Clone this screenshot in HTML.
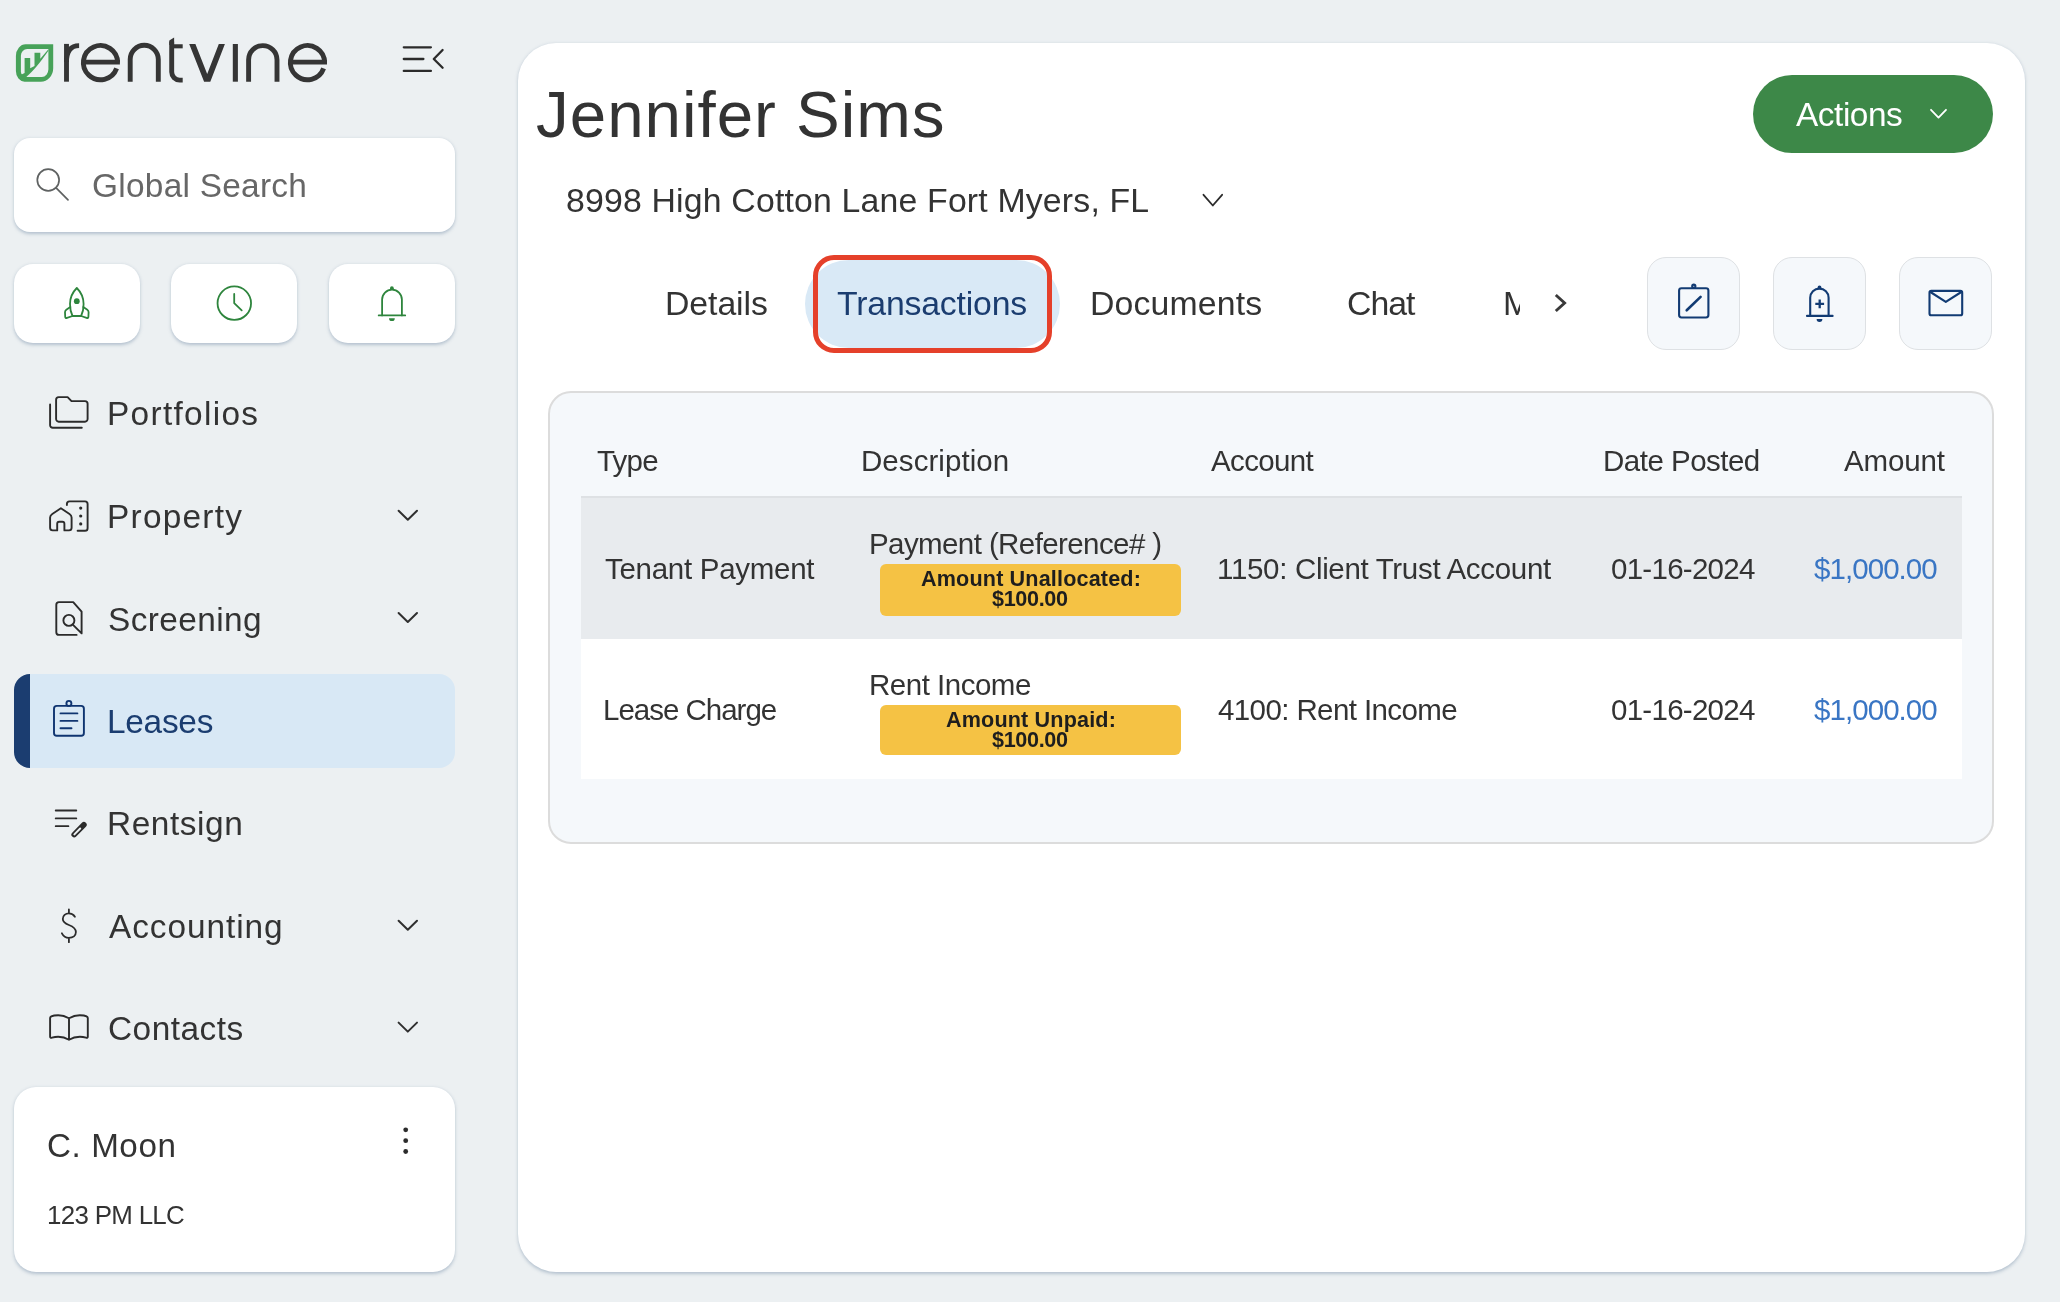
<!DOCTYPE html>
<html><head><meta charset="utf-8">
<style>
html,body{margin:0;padding:0}
body{width:2060px;height:1302px;background:#ecf0f2;position:relative;overflow:hidden;font-family:"Liberation Sans",sans-serif}
.abs{position:absolute}
.tx{position:absolute;white-space:pre;line-height:1;will-change:transform;font-family:"Liberation Sans",sans-serif}
.card{position:absolute;background:#fff}
svg{position:absolute;left:0;top:0;overflow:visible}
</style></head>
<body>
<!-- sidebar boxes -->
<div class="card" style="left:14px;top:138px;width:441px;height:94px;border-radius:16px;box-shadow:0 1.5px 3.5px rgba(90,118,150,0.38)"></div>
<div class="card" style="left:14px;top:264px;width:126px;height:79px;border-radius:19px;box-shadow:0 1.5px 3.5px rgba(90,118,150,0.38)"></div>
<div class="card" style="left:171px;top:264px;width:126px;height:79px;border-radius:19px;box-shadow:0 1.5px 3.5px rgba(90,118,150,0.38)"></div>
<div class="card" style="left:329px;top:264px;width:126px;height:79px;border-radius:19px;box-shadow:0 1.5px 3.5px rgba(90,118,150,0.38)"></div>
<div class="abs" style="left:14px;top:674px;width:425px;height:94px;border-radius:16px;background:#d8e8f5;border-left:16px solid #1b3d70"></div>
<div class="card" style="left:14px;top:1087px;width:441px;height:185px;border-radius:22px;box-shadow:0 1.5px 3.5px rgba(90,118,150,0.38)"></div>
<!-- main card -->
<div class="card" style="left:518px;top:43px;width:1507px;height:1229px;border-radius:38px;box-shadow:0 1.5px 3.5px rgba(90,118,150,0.38)"></div>
<!-- actions button -->
<div class="abs" style="left:1753px;top:75px;width:240px;height:78px;border-radius:39px;background:#3d8848"></div>
<!-- transactions pill -->
<div class="abs" style="left:805px;top:259.5px;width:255px;height:88px;border-radius:44px;background:#d9e9f6"></div>
<div class="abs" style="left:813px;top:255px;width:228.5px;height:87.5px;border-radius:21px;border:5px solid #e5402a"></div>
<!-- icon buttons -->
<div class="abs" style="left:1647px;top:256.5px;width:91px;height:91px;border-radius:19px;background:#f5f8fb;border:1.5px solid #dee1e4"></div>
<div class="abs" style="left:1773px;top:256.5px;width:91px;height:91px;border-radius:19px;background:#f5f8fb;border:1.5px solid #dee1e4"></div>
<div class="abs" style="left:1899px;top:256.5px;width:91px;height:91px;border-radius:19px;background:#f5f8fb;border:1.5px solid #dee1e4"></div>
<!-- table container -->
<div class="abs" style="left:548px;top:390.5px;width:1442px;height:449.5px;border-radius:23px;background:#f5f8fb;border:2px solid #dcdcdc"></div>
<div class="abs" style="left:581px;top:496px;width:1381px;height:2px;background:#dee1e4"></div>
<div class="abs" style="left:581px;top:498px;width:1381px;height:141px;background:#e8ebee"></div>
<div class="abs" style="left:581px;top:639px;width:1381px;height:140px;background:#ffffff"></div>
<!-- badges -->
<div class="abs" style="left:879.5px;top:563.5px;width:301px;height:52px;border-radius:6px;background:#f5c244"></div>
<div class="abs" style="left:879.5px;top:704.5px;width:301px;height:50px;border-radius:6px;background:#f5c244"></div>
<!-- M clipped -->
<div class="abs" style="left:1495px;top:280px;width:25.4px;height:50px;overflow:hidden">
 <div class="tx" style="left:8.3px;top:6.6px;font-size:33.8px;color:#333">M</div>
</div>

<svg width="2060" height="1302" viewBox="0 0 2060 1302" fill="none" stroke-linecap="round" stroke-linejoin="round">
 <!-- logo icon -->
 <g fill="#47a259" stroke="none">
  <path fill-rule="evenodd" d="M25.7,44.2 H53.2 V68.3 A12.4,13.4 0 0 1 40.8,81.7 H24.6 A8.7,10.6 0 0 1 15.9,71.1 V55.9 A9.8,11.7 0 0 1 25.7,44.2 Z M27.2,49 H48.4 V69.3 A6.5,7.6 0 0 1 41.9,76.9 H27.5 A6.6,5.1 0 0 1 20.9,71.8 V55.5 A6.3,6.5 0 0 1 27.2,49 Z"/>
  <path d="M24.6,58 H30.2 V68.3 L34.5,66.1 V52.7 H40.3 V58.7 L48.4,49.2 V50.8 C44,57 40,62.5 36.5,66.5 C33,70.5 29.5,74 26.2,77 L25,79.5 L19.5,75.5 L24.6,72.9 Z"/>
 </g>
 <!-- wordmark -->
 <g stroke="#353535" stroke-width="4.9" stroke-linecap="butt" stroke-linejoin="miter">
  <path d="M66.5,43.9 V81.7"/>
  <path d="M66.5,62 C66.5,51 71,45.6 79.1,45.6"/>
  <path d="M81.5,62.1 H119.9"/>
  <path d="M117.6,62.6 A17.1,17.1 0 1 0 116.6,68.4"/>
  <path d="M130.2,81.7 V59.35 A14.05,14.05 0 0 1 158.3,59.35 V81.7"/>
  <path d="M171.7,41.5 V72.1 A8,8 0 0 0 179.7,80.1 H182.7"/>
  <path d="M173.9,46.3 H182.7" stroke-width="4.1"/>
  <path d="M232.8,44 H237.9 V81.7 H232.8 Z" stroke="none" fill="#353535"/>
  <path d="M248.6,81.7 V59.8 A14.2,14.2 0 0 1 277,59.8 V81.7"/>
  <path d="M288.5,62.1 H327"/>
  <path d="M324.6,62.6 A17.1,17.1 0 1 0 323.6,68.4"/>
 </g>
 <path d="M169.3,40.4 L174.1,37.4 V45 H169.3 Z" fill="#353535"/>
 <path d="M189.2,44 H195.4 L207.2,73.9 L218.8,44 H224.9 L210.3,81.7 H204.1 Z" fill="#353535"/>
 <!-- hamburger collapse -->
 <g stroke="#2b2b2b" stroke-width="2.3">
  <path d="M403.8,47.3 H430.9 M403.8,59 H423.4 M403.8,70.9 H430.9"/>
  <path d="M442.6,50 L433.8,59 L442.6,67.8"/>
 </g>
 <!-- search -->
 <g stroke="#5f6262" stroke-width="1.7">
  <circle cx="48.2" cy="180" r="10.9"/>
  <path d="M56.1,187.8 L68,199.9"/>
 </g>
 <!-- rocket -->
 <g stroke="#2e853d" stroke-width="1.8">
  <path d="M76.8,288 C72.3,292.5 70,298.5 70,304 C70,309 71,313 72.5,316 L81.1,316 C82.6,313 83.6,309 83.6,304 C83.6,298.5 81.3,292.5 76.8,288 Z"/>
  <path d="M70.3,307 L66.3,309.7 Q65,310.6 65,312.3 L65.2,316.8 Q65.3,318.5 67,317.8 L72.5,316"/>
  <path d="M83.3,307 L87.3,309.7 Q88.6,310.6 88.6,312.3 L88.4,316.8 Q88.3,318.5 86.6,317.8 L81.1,316"/>
 </g>
 <circle cx="76.8" cy="301.2" r="2.9" fill="#2e853d"/>
 <!-- clock -->
 <g stroke="#2e853d" stroke-width="1.8">
  <circle cx="234.3" cy="303.15" r="16.75"/>
  <path d="M234.2,294 V303.2 L241.7,310.4"/>
 </g>
 <!-- bell -->
 <g stroke="#2e853d" stroke-width="1.8">
  <path d="M382.1,315.4 V299.6 A9.9,9.9 0 0 1 401.9,299.6 V315.4"/>
  <path d="M378.7,315.4 H405.2"/>
 </g>
 <circle cx="391.9" cy="288.2" r="1.9" fill="#2e853d"/>
 <path d="M389,318.2 H394.8 A2.9,2.9 0 0 1 389,318.2 Z" fill="#2e853d"/>
 <!-- nav icons -->
 <g stroke="#2b2b2b" stroke-width="1.9">
  <path d="M58.7,397.1 H67.6 L71.5,401.1 H85 A2.6,2.6 0 0 1 87.6,403.7 V419.1 A2.6,2.6 0 0 1 85,421.7 H58.7 A2.6,2.6 0 0 1 56.1,419.1 V399.7 A2.6,2.6 0 0 1 58.7,397.1 Z"/>
  <path d="M50.1,404.4 V425.2 A2.6,2.6 0 0 0 52.7,427.8 H81.8"/>
  <!-- property -->
  <path d="M52.3,514 L60.9,508.3 L69.5,514 Q71.6,515.4 71.6,517.6 V527.8 A2.6,2.6 0 0 1 69,530.4 H64.4 V523.8 A2,2 0 0 0 62.4,521.8 H59.2 A2,2 0 0 0 57.2,523.8 V530.4 H52.7 A2.6,2.6 0 0 1 50.1,527.8 V517.6 Q50.1,515.4 52.3,514 Z"/>
  <path d="M66.9,505.1 V504 A2.6,2.6 0 0 1 69.5,501.4 H85 A2.6,2.6 0 0 1 87.6,504 V528.2 A2.6,2.6 0 0 1 85,530.8 H77.6"/>
  <!-- screening -->
  <path d="M76.6,634.9 H59 A2.7,2.7 0 0 1 56.3,632.2 V604.8 A2.7,2.7 0 0 1 59,602.1 H73.2 L81.6,611.7 V633.4 L72.8,624.6"/>
  <circle cx="68.9" cy="620.4" r="5.5"/>
  <!-- rentsign -->
  <path d="M55.7,810.5 H76.3 M55.7,818.4 H76.3 M55.7,826.2 H68.4" stroke-width="1.8"/>
  <!-- dollar -->
  <path d="M74.9,916.7 C73.5,914.5 71.5,913.4 68.9,913.4 C65.5,913.4 62.8,915.6 62.8,919 C62.8,922 65,923.5 68.9,925 C73.5,926.8 75.9,928.5 75.9,932 C75.9,935.5 73,937.8 68.9,937.8 C65.8,937.8 63.3,936 61.9,933.3 M68.9,909.4 V913.4 M68.9,937.8 V942.2" stroke-width="1.8"/>
  <!-- contacts -->
  <path d="M69,1018.3 C66,1016.5 62,1015.2 58.2,1015.2 C55,1015.2 52.5,1015.8 51.3,1016.4 Q50.1,1017 50.1,1018.3 V1036.5 Q50.1,1038.3 52,1037.7 C54,1037.1 56,1036.8 58.2,1036.8 C62,1036.8 66,1038 69,1039.8 C72,1038 76,1036.8 79.8,1036.8 C82,1036.8 84,1037.1 86,1037.7 Q87.8,1038.3 87.8,1036.5 V1018.3 Q87.8,1017 86.6,1016.4 C85.5,1015.8 83,1015.2 79.8,1015.2 C76,1015.2 72,1016.5 69,1018.3 V1039.8"/>
 </g>
 <!-- rentsign pencil -->
 <path d="M74.2,834.6 L83.9,824.7" stroke="#2b2b2b" stroke-width="5.6"/>
 <path d="M74.4,834.4 L80.2,828.5" stroke="#ecf0f2" stroke-width="2"/>
 <!-- leases icon -->
 <g stroke="#0f3470" stroke-width="1.9">
  <path d="M56.8,705.9 H81.1 A2.8,2.8 0 0 1 83.9,708.7 V732.9 A2.8,2.8 0 0 1 81.1,735.7 H56.8 A2.8,2.8 0 0 1 54,732.9 V708.7 A2.8,2.8 0 0 1 56.8,705.9 Z"/>
  <circle cx="68.9" cy="703.4" r="2.5"/>
  <path d="M60.5,713.4 H77.4 M60.5,720.9 H77.4 M60.5,728.2 H71.5"/>
 </g>
 <!-- nav chevrons -->
 <g stroke="#2f2f2f" stroke-width="2">
  <path d="M398.6,510.7 L407.8,519.7 L417,510.7"/>
  <path d="M398.6,613 L407.8,622 L417,613"/>
  <path d="M398.6,920.7 L407.8,929.7 L417,920.7"/>
  <path d="M398.6,1022.6 L407.8,1031.6 L417,1022.6"/>
 </g>
 <!-- kebab -->
 <g fill="#2b2b2b">
  <circle cx="405.7" cy="1129.8" r="2.4"/><circle cx="405.7" cy="1140.7" r="2.4"/><circle cx="405.7" cy="1151.5" r="2.4"/>
 </g>
 <!-- address chevron -->
 <path d="M1203.5,194.8 L1212.8,205.5 L1222.1,194.8" stroke="#2b2b2b" stroke-width="1.8"/>
 <!-- actions chevron -->
 <path d="M1931,109.8 L1938.5,117.6 L1946,109.8" stroke="#ffffff" stroke-width="1.8"/>
 <!-- tabs chevron right -->
 <path d="M1555.8,295 L1564.6,303 L1555.8,311" stroke="#3a3a3a" stroke-width="2.9" stroke-linecap="butt" stroke-linejoin="miter"/>
 <!-- right icons -->
 <g stroke="#123b73" stroke-width="2.1">
  <path d="M1681.5,288.2 H1706 A2.4,2.4 0 0 1 1708.4,290.6 V315.1 A2.4,2.4 0 0 1 1706,317.5 H1681.5 A2.4,2.4 0 0 1 1679.1,315.1 V290.6 A2.4,2.4 0 0 1 1681.5,288.2 Z"/>
  <circle cx="1693.8" cy="286.2" r="1.6"/>
  <path d="M1686.7,310.3 L1700.6,296.9" stroke-width="2.6"/>
  <path d="M1810.2,315.9 V297.8 A9.2,9.2 0 0 1 1828.6,297.8 V315.9 M1807,315.9 H1832.6"/>
  <path d="M1819.7,299.4 V308.2 M1815.3,303.8 H1824.1" stroke-width="2.3" stroke-linecap="butt"/>
  <path d="M1931.3,290.9 H1960.4 A1.8,1.8 0 0 1 1962.2,292.7 V313.5 A1.8,1.8 0 0 1 1960.4,315.3 H1931.3 A1.8,1.8 0 0 1 1929.5,313.5 V292.7 A1.8,1.8 0 0 1 1931.3,290.9 Z"/>
  <path d="M1930.4,292 L1945.8,301.9 L1961.3,292"/>
 </g>
 <circle cx="1819.5" cy="287.4" r="1.9" fill="#123b73"/>
 <path d="M1816.6,319 H1822.4 A2.9,2.9 0 0 1 1816.6,319 Z" fill="#123b73"/>
 <!-- property dots -->
 <g fill="#2b2b2b"><circle cx="80.7" cy="508.1" r="1.6"/><circle cx="80.7" cy="516" r="1.6"/><circle cx="80.7" cy="523.9" r="1.6"/></g>
</svg>
<div class="tx" style="left:91.93px;top:169.32px;font-size:33.40px;letter-spacing:0.274px;color:#676767;font-weight:normal">Global Search</div>
<div class="tx" style="left:107.29px;top:397.02px;font-size:33.40px;letter-spacing:1.314px;color:#333333;font-weight:normal">Portfolios</div>
<div class="tx" style="left:107.39px;top:499.52px;font-size:33.40px;letter-spacing:1.254px;color:#333333;font-weight:normal">Property</div>
<div class="tx" style="left:108.36px;top:602.62px;font-size:33.40px;letter-spacing:0.415px;color:#333333;font-weight:normal">Screening</div>
<div class="tx" style="left:106.79px;top:704.72px;font-size:33.40px;letter-spacing:-0.270px;color:#1b3d70;font-weight:normal">Leases</div>
<div class="tx" style="left:107.29px;top:806.92px;font-size:33.40px;letter-spacing:0.566px;color:#333333;font-weight:normal">Rentsign</div>
<div class="tx" style="left:108.80px;top:910.02px;font-size:33.40px;letter-spacing:0.936px;color:#333333;font-weight:normal">Accounting</div>
<div class="tx" style="left:108.33px;top:1011.72px;font-size:33.40px;letter-spacing:0.500px;color:#333333;font-weight:normal">Contacts</div>
<div class="tx" style="left:46.84px;top:1128.59px;font-size:33.20px;letter-spacing:0.575px;color:#333333;font-weight:normal">C. Moon</div>
<div class="tx" style="left:46.78px;top:1202.77px;font-size:25.90px;letter-spacing:-0.683px;color:#333333;font-weight:normal">123 PM LLC</div>
<div class="tx" style="left:535.98px;top:82.34px;font-size:65.50px;letter-spacing:0.975px;color:#333333;font-weight:normal">Jennifer Sims</div>
<div class="tx" style="left:565.64px;top:183.98px;font-size:33.80px;letter-spacing:0.184px;color:#333333;font-weight:normal">8998 High Cotton Lane Fort Myers, FL</div>
<div class="tx" style="left:665.16px;top:286.58px;font-size:33.80px;letter-spacing:-0.070px;color:#333333;font-weight:normal">Details</div>
<div class="tx" style="left:837.07px;top:286.58px;font-size:33.80px;letter-spacing:-0.187px;color:#1b3d70;font-weight:normal">Transactions</div>
<div class="tx" style="left:1089.96px;top:286.58px;font-size:33.80px;letter-spacing:0.144px;color:#333333;font-weight:normal">Documents</div>
<div class="tx" style="left:1347.22px;top:286.58px;font-size:33.80px;letter-spacing:-1.009px;color:#333333;font-weight:normal">Chat</div>
<div class="tx" style="left:1796.10px;top:97.92px;font-size:33.40px;letter-spacing:-0.447px;color:#ffffff;font-weight:normal">Actions</div>
<div class="tx" style="left:596.74px;top:446.32px;font-size:29.50px;letter-spacing:-0.800px;color:#333333;font-weight:normal">Type</div>
<div class="tx" style="left:860.70px;top:446.32px;font-size:29.50px;letter-spacing:0.060px;color:#333333;font-weight:normal">Description</div>
<div class="tx" style="left:1210.50px;top:446.32px;font-size:29.50px;letter-spacing:-0.649px;color:#333333;font-weight:normal">Account</div>
<div class="tx" style="left:1603.30px;top:446.32px;font-size:29.50px;letter-spacing:-0.509px;color:#333333;font-weight:normal">Date Posted</div>
<div class="tx" style="left:1843.70px;top:446.32px;font-size:29.50px;letter-spacing:-0.153px;color:#333333;font-weight:normal">Amount</div>
<div class="tx" style="left:604.84px;top:553.82px;font-size:29.50px;letter-spacing:-0.279px;color:#333333;font-weight:normal">Tenant Payment</div>
<div class="tx" style="left:868.80px;top:529.22px;font-size:29.50px;letter-spacing:-0.592px;color:#333333;font-weight:normal">Payment (Reference# )</div>
<div class="tx" style="left:1216.86px;top:553.82px;font-size:29.50px;letter-spacing:-0.320px;color:#333333;font-weight:normal">1150: Client Trust Account</div>
<div class="tx" style="left:1611.38px;top:553.82px;font-size:29.50px;letter-spacing:-0.727px;color:#333333;font-weight:normal">01-16-2024</div>
<div class="tx" style="left:1814.20px;top:553.82px;font-size:29.50px;letter-spacing:-0.938px;color:#3a76c4;font-weight:normal">$1,000.00</div>
<div class="tx" style="left:603.00px;top:694.82px;font-size:29.50px;letter-spacing:-1.011px;color:#333333;font-weight:normal">Lease Charge</div>
<div class="tx" style="left:868.80px;top:670.12px;font-size:29.50px;letter-spacing:-0.495px;color:#333333;font-weight:normal">Rent Income</div>
<div class="tx" style="left:1217.54px;top:694.82px;font-size:29.50px;letter-spacing:-0.601px;color:#333333;font-weight:normal">4100: Rent Income</div>
<div class="tx" style="left:1611.38px;top:694.82px;font-size:29.50px;letter-spacing:-0.727px;color:#333333;font-weight:normal">01-16-2024</div>
<div class="tx" style="left:1814.20px;top:694.82px;font-size:29.50px;letter-spacing:-0.938px;color:#3a76c4;font-weight:normal">$1,000.00</div>
<div class="tx" style="left:920.66px;top:567.51px;font-size:21.60px;letter-spacing:0.152px;color:#1e1e1e;font-weight:bold">Amount Unallocated:</div>
<div class="tx" style="left:992.10px;top:588.11px;font-size:21.60px;letter-spacing:-0.334px;color:#1e1e1e;font-weight:bold">$100.00</div>
<div class="tx" style="left:945.66px;top:708.51px;font-size:21.60px;letter-spacing:0.151px;color:#1e1e1e;font-weight:bold">Amount Unpaid:</div>
<div class="tx" style="left:992.10px;top:728.61px;font-size:21.60px;letter-spacing:-0.334px;color:#1e1e1e;font-weight:bold">$100.00</div>
</body></html>
